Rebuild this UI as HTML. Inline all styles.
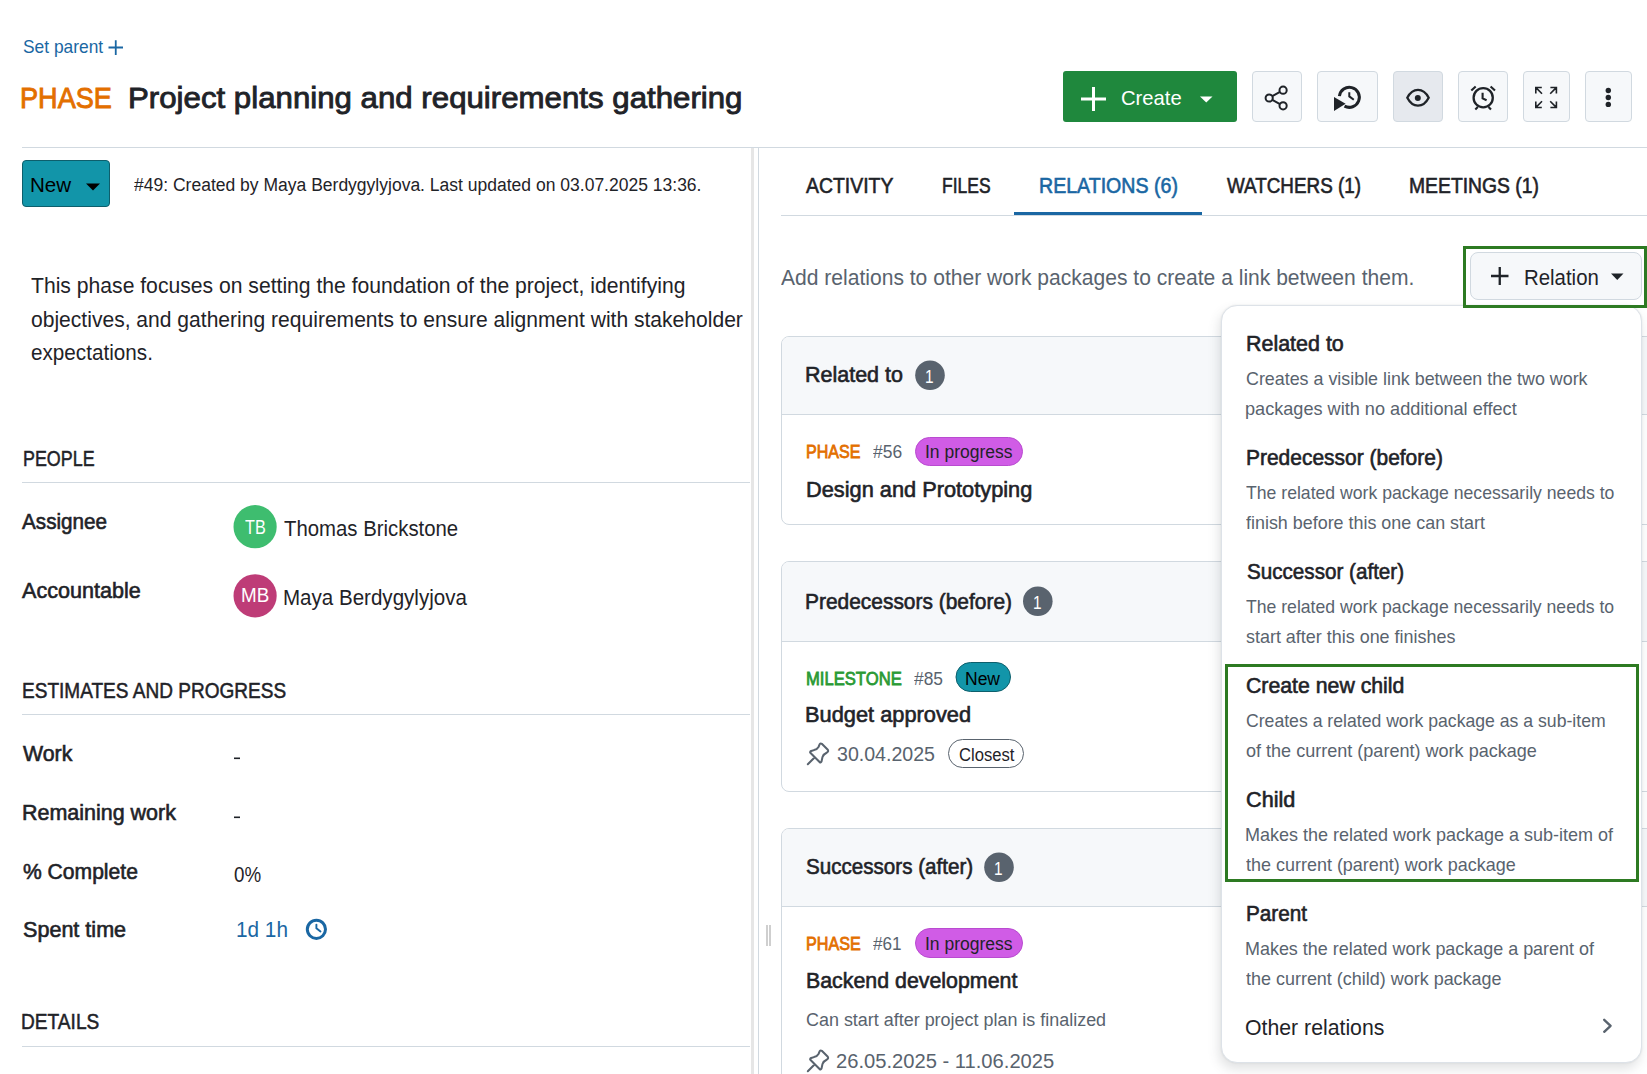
<!DOCTYPE html>
<html><head><meta charset="utf-8"><title>Work package</title>
<style>
html,body{margin:0;padding:0;background:#fff;width:1647px;height:1074px;overflow:hidden;position:relative;font-family:"Liberation Sans",sans-serif;}
.t{position:absolute;white-space:nowrap;transform-origin:0 0;}
.a{position:absolute;box-sizing:border-box;}
svg.i{position:absolute;overflow:visible;}
</style></head><body>

<!-- header -->
<svg class="i" style="left:0;top:0" width="1647" height="1074">
  <!-- set parent plus -->
  <path d="M108.5 47.5H123M115.75 40.2V55" stroke="#1a67a3" stroke-width="1.8" fill="none"/>
</svg>

<!-- Create button -->
<div class="a" style="left:1063px;top:71px;width:174px;height:51px;background:#1f883d;border-radius:3px;"></div>
<svg class="i" style="left:0;top:0" width="1647" height="200">
  <path d="M1081 99H1106M1093.5 87V111" stroke="#fff" stroke-width="3" fill="none"/>
  <path d="M1200 96.5H1212.5L1206.25 102.5Z" fill="#fff"/>
</svg>

<!-- icon buttons -->
<div class="a" style="left:1252px;top:71px;width:50px;height:51px;background:#f6f8fa;border:1px solid #d1d9e0;border-radius:4px;"></div>
<div class="a" style="left:1317px;top:71px;width:61px;height:51px;background:#f6f8fa;border:1px solid #d1d9e0;border-radius:4px;"></div>
<div class="a" style="left:1393px;top:71px;width:50px;height:51px;background:#e6e9ee;border:1px solid #d1d9e0;border-radius:4px;"></div>
<div class="a" style="left:1458px;top:71px;width:50px;height:51px;background:#f6f8fa;border:1px solid #d1d9e0;border-radius:4px;"></div>
<div class="a" style="left:1523px;top:71px;width:47px;height:51px;background:#f6f8fa;border:1px solid #d1d9e0;border-radius:4px;"></div>
<div class="a" style="left:1585px;top:71px;width:47px;height:51px;background:#f6f8fa;border:1px solid #d1d9e0;border-radius:4px;"></div>
<svg class="i" style="left:0;top:0" width="1647" height="200">
  <g stroke="#1f2328" stroke-width="2" fill="none">
    <!-- share -->
    <circle cx="1269.2" cy="98" r="3.6"/><circle cx="1283.1" cy="90.2" r="3.6"/><circle cx="1283.1" cy="105.8" r="3.6"/>
    <path d="M1272.3 96.2L1280 91.9M1272.3 99.8L1280 104.1"/>
    <!-- history -->
    <path d="M1339.4 96.1A10 10 0 1 1 1344.5 106.1" stroke-width="3"/>
    <path d="M1349.3 92.2V96.4L1353.8 99.8" stroke-width="2"/>
    <!-- eye -->
    <path d="M1407.3 97.8C1410 92.5 1413.8 89.9 1418 89.9C1422.2 89.9 1426 92.5 1428.7 97.8C1426 103.1 1422.2 105.7 1418 105.7C1413.8 105.7 1410 103.1 1407.3 97.8Z" stroke-width="2.3"/>
    <!-- alarm -->
    <circle cx="1483.2" cy="97.7" r="9.6" stroke-width="2.3"/>
    <path d="M1482.6 92.8V98.4L1486.6 100.2" stroke-width="2.1"/>
    <path d="M1471.3 90.6L1475.7 86.5M1495 90.6L1490.6 86.5M1477.8 107L1475.3 109.6M1488.5 107L1491 109.6" stroke-width="2.1"/>
    <!-- fullscreen -->
    <path d="M1535.8 93.5V87.5H1541.8M1536.2 87.9L1542 93.7M1556.4 93.5V87.5H1550.4M1556 87.9L1550.2 93.7M1535.8 101.5V107.5H1541.8M1536.2 107.1L1542 101.3M1556.4 101.5V107.5H1550.4M1556 107.1L1550.2 101.3" stroke-width="1.6"/>
  </g>
  <path d="M1334 97L1334 111L1345.6 103.7Z" fill="#1f2328"/>
  <circle cx="1417.8" cy="97.9" r="3" fill="#1f2328"/>
  <circle cx="1608.3" cy="90.5" r="2.7" fill="#1f2328"/><circle cx="1608.3" cy="97.5" r="2.7" fill="#1f2328"/><circle cx="1608.3" cy="104.4" r="2.7" fill="#1f2328"/>
</svg>

<!-- top divider -->
<div class="a" style="left:22px;top:147px;width:1625px;height:1px;background:#d1d9e0;"></div>

<!-- left panel -->
<div class="a" style="left:22px;top:160px;width:88px;height:47px;background:#1295a9;border:1px solid #0d5f6c;border-radius:4px;"></div>
<svg class="i" style="left:0;top:0" width="760" height="1074">
  <path d="M86 183.5H100L93 190.5Z" fill="#000"/>
  <circle cx="255.1" cy="526.7" r="21.6" fill="#3ebd6f"/>
  <circle cx="255.1" cy="595.8" r="21.6" fill="#be3c77"/>
  <rect x="234" y="757.5" width="6" height="1.6" fill="#1f2328"/>
  <rect x="234" y="816.5" width="6" height="1.6" fill="#1f2328"/>
  <circle cx="316.4" cy="929.3" r="9.1" stroke="#1a67a3" stroke-width="3" fill="none"/>
  <path d="M316.4 924.6V928.2L320.5 931.5" stroke="#1a67a3" stroke-width="1.9" stroke-linecap="round" fill="none"/>
</svg>
<div class="a" style="left:22px;top:482px;width:728px;height:1px;background:#d1d9e0;"></div>
<div class="a" style="left:22px;top:714px;width:728px;height:1px;background:#d1d9e0;"></div>
<div class="a" style="left:22px;top:1046px;width:728px;height:1px;background:#d1d9e0;"></div>

<!-- scrollbar + splitter -->
<div class="a" style="left:751px;top:148px;width:3px;height:926px;background:#e6e6e6;"></div>
<div class="a" style="left:758px;top:148px;width:1px;height:926px;background:#d1d9e0;"></div>
<div class="a" style="left:766px;top:925px;width:2px;height:21px;background:#cfcfcf;"></div>
<div class="a" style="left:769px;top:925px;width:2px;height:21px;background:#cfcfcf;"></div>

<!-- tabs -->
<div class="a" style="left:781px;top:215px;width:866px;height:1px;background:#d1d9e0;"></div>
<div class="a" style="left:1014px;top:212px;width:188px;height:3px;background:#1a67a3;"></div>

<!-- cards -->
<div class="a" style="left:781px;top:336px;width:900px;height:189px;border:1px solid #d1d9e0;border-radius:8px;background:#fff;overflow:hidden;">
  <div class="a" style="left:0;top:0;width:100%;height:78px;background:#f6f8fa;border-bottom:1px solid #d1d9e0;"></div>
</div>
<div class="a" style="left:781px;top:561px;width:900px;height:231px;border:1px solid #d1d9e0;border-radius:8px;background:#fff;overflow:hidden;">
  <div class="a" style="left:0;top:0;width:100%;height:80px;background:#f6f8fa;border-bottom:1px solid #d1d9e0;"></div>
</div>
<div class="a" style="left:781px;top:828px;width:900px;height:300px;border:1px solid #d1d9e0;border-radius:8px;background:#fff;overflow:hidden;">
  <div class="a" style="left:0;top:0;width:100%;height:78px;background:#f6f8fa;border-bottom:1px solid #d1d9e0;"></div>
</div>
<svg class="i" style="left:0;top:0" width="1647" height="1074">
  <circle cx="930" cy="375.2" r="14.8" fill="#59636e"/>
  <circle cx="1037.8" cy="601.3" r="14.8" fill="#59636e"/>
  <circle cx="999" cy="867.3" r="14.8" fill="#59636e"/>
  <rect x="915.5" y="437.5" width="107" height="28" rx="14" fill="#d05ce6" stroke="#b94bd0" stroke-width="1"/>
  <rect x="915.5" y="928.5" width="107" height="29" rx="14.5" fill="#d05ce6" stroke="#b94bd0" stroke-width="1"/>
  <rect x="956" y="662.5" width="54.5" height="29" rx="14.5" fill="#1295a9" stroke="#0d5f6c" stroke-width="1"/>
  <rect x="948.5" y="739.5" width="75" height="28" rx="14" fill="#fff" stroke="#59636e" stroke-width="1"/>
  <g stroke="#59636e" stroke-width="2" fill="none" stroke-linejoin="round" stroke-linecap="round">
    <path transform="translate(802 738)" d="M8.3 14.8L17.8 24.3Q18.8 24.9 19.5 23.5L20.5 19Q21.6 16 25 14.5Q26.8 13.5 25.8 11.8L19.8 5.8Q18.5 5 17.6 6.3L16.5 9Q15 11.6 12 12.1L9.2 13Q7.6 13.8 8.3 14.8ZM5.8 26.3L12.3 19.8"/>
    <path transform="translate(802 1045)" d="M8.3 14.8L17.8 24.3Q18.8 24.9 19.5 23.5L20.5 19Q21.6 16 25 14.5Q26.8 13.5 25.8 11.8L19.8 5.8Q18.5 5 17.6 6.3L16.5 9Q15 11.6 12 12.1L9.2 13Q7.6 13.8 8.3 14.8ZM5.8 26.3L12.3 19.8"/>
  </g>
</svg>

<!-- relation button + highlight -->
<div class="a" style="left:1469.5px;top:252px;width:172.5px;height:48px;background:#f6f8fa;border:1px solid #d1d9e0;border-radius:8px;"></div>
<svg class="i" style="left:0;top:0" width="1647" height="400">
  <path d="M1491 276H1508.5M1499.75 267V285" stroke="#1f2328" stroke-width="2.3" fill="none"/>
  <path d="M1611 273.5H1623.5L1617.25 280Z" fill="#1f2328"/>
</svg>

<div class="t" id="t0" style="left:22.50px;top:38.00px;font-size:18.6px;line-height:18.6px;font-weight:normal;color:#1a67a3;transform:scaleX(0.9339)">Set parent<span class="bm" style="display:inline-block;width:0;height:0;vertical-align:baseline"></span></div>
<div class="t" id="t1" style="left:20.21px;top:83.00px;font-size:30.3px;line-height:30.3px;font-weight:normal;-webkit-text-stroke:0.9px #e36f00;color:#e36f00;transform:scaleX(0.8944)">PHASE<span class="bm" style="display:inline-block;width:0;height:0;vertical-align:baseline"></span></div>
<div class="t" id="t2" style="left:127.94px;top:83.00px;font-size:30.3px;line-height:30.3px;font-weight:normal;-webkit-text-stroke:0.9px #1f2328;color:#1f2328;transform:scaleX(1.0306)">Project planning and requirements gathering<span class="bm" style="display:inline-block;width:0;height:0;vertical-align:baseline"></span></div>
<div class="t" id="t3" style="left:1121.04px;top:87.00px;font-size:21px;line-height:21px;font-weight:normal;color:#ffffff;transform:scaleX(0.9617)">Create<span class="bm" style="display:inline-block;width:0;height:0;vertical-align:baseline"></span></div>
<div class="t" id="t4" style="left:30.02px;top:174.00px;font-size:21px;line-height:21px;font-weight:normal;color:#000000;transform:scaleX(0.9798)">New<span class="bm" style="display:inline-block;width:0;height:0;vertical-align:baseline"></span></div>
<div class="t" id="t5" style="left:134.00px;top:176.00px;font-size:18px;line-height:18px;font-weight:normal;color:#1f2328;transform:scaleX(0.9727)">#49: Created by Maya Berdygylyjova. Last updated on 03.07.2025 13:36.<span class="bm" style="display:inline-block;width:0;height:0;vertical-align:baseline"></span></div>
<div class="t" id="t6" style="left:31.00px;top:276.00px;font-size:21.4px;line-height:21.4px;font-weight:normal;color:#1f2328;transform:scaleX(0.9880)">This phase focuses on setting the foundation of the project, identifying<span class="bm" style="display:inline-block;width:0;height:0;vertical-align:baseline"></span></div>
<div class="t" id="t7" style="left:31.00px;top:310.00px;font-size:21.4px;line-height:21.4px;font-weight:normal;color:#1f2328;transform:scaleX(0.9847)">objectives, and gathering requirements to ensure alignment with stakeholder<span class="bm" style="display:inline-block;width:0;height:0;vertical-align:baseline"></span></div>
<div class="t" id="t8" style="left:31.00px;top:343.00px;font-size:21.4px;line-height:21.4px;font-weight:normal;color:#1f2328;transform:scaleX(0.9669)">expectations.<span class="bm" style="display:inline-block;width:0;height:0;vertical-align:baseline"></span></div>
<div class="t" id="t9" style="left:22.66px;top:449.00px;font-size:21.4px;line-height:21.4px;font-weight:normal;-webkit-text-stroke:0.5px #1f2328;color:#1f2328;transform:scaleX(0.8359)">PEOPLE<span class="bm" style="display:inline-block;width:0;height:0;vertical-align:baseline"></span></div>
<div class="t" id="t10" style="left:22.40px;top:512.00px;font-size:21.4px;line-height:21.4px;font-weight:normal;-webkit-text-stroke:0.6px #1f2328;color:#1f2328;transform:scaleX(0.9667)">Assignee<span class="bm" style="display:inline-block;width:0;height:0;vertical-align:baseline"></span></div>
<div class="t" id="t11" style="left:244.50px;top:518.00px;font-size:19.8px;line-height:19.8px;font-weight:normal;color:#ffffff;transform:scaleX(0.8173)">TB<span class="bm" style="display:inline-block;width:0;height:0;vertical-align:baseline"></span></div>
<div class="t" id="t12" style="left:283.70px;top:519.00px;font-size:21.4px;line-height:21.4px;font-weight:normal;color:#1f2328;transform:scaleX(0.9513)">Thomas Brickstone<span class="bm" style="display:inline-block;width:0;height:0;vertical-align:baseline"></span></div>
<div class="t" id="t13" style="left:22.40px;top:581.00px;font-size:21.4px;line-height:21.4px;font-weight:normal;-webkit-text-stroke:0.6px #1f2328;color:#1f2328;transform:scaleX(1.0083)">Accountable<span class="bm" style="display:inline-block;width:0;height:0;vertical-align:baseline"></span></div>
<div class="t" id="t14" style="left:241.06px;top:585.00px;font-size:20px;line-height:20px;font-weight:normal;color:#ffffff;transform:scaleX(0.9421)">MB<span class="bm" style="display:inline-block;width:0;height:0;vertical-align:baseline"></span></div>
<div class="t" id="t15" style="left:283.04px;top:588.00px;font-size:21.4px;line-height:21.4px;font-weight:normal;color:#1f2328;transform:scaleX(0.9606)">Maya Berdygylyjova<span class="bm" style="display:inline-block;width:0;height:0;vertical-align:baseline"></span></div>
<div class="t" id="t16" style="left:21.91px;top:681.00px;font-size:21.4px;line-height:21.4px;font-weight:normal;-webkit-text-stroke:0.5px #1f2328;color:#1f2328;transform:scaleX(0.8899)">ESTIMATES AND PROGRESS<span class="bm" style="display:inline-block;width:0;height:0;vertical-align:baseline"></span></div>
<div class="t" id="t17" style="left:22.80px;top:744.00px;font-size:21.4px;line-height:21.4px;font-weight:normal;-webkit-text-stroke:0.6px #1f2328;color:#1f2328;transform:scaleX(0.9955)">Work<span class="bm" style="display:inline-block;width:0;height:0;vertical-align:baseline"></span></div>
<div class="t" id="t18" style="left:21.80px;top:803.00px;font-size:21.4px;line-height:21.4px;font-weight:normal;-webkit-text-stroke:0.6px #1f2328;color:#1f2328;transform:scaleX(1.0035)">Remaining work<span class="bm" style="display:inline-block;width:0;height:0;vertical-align:baseline"></span></div>
<div class="t" id="t19" style="left:22.80px;top:862.00px;font-size:21.4px;line-height:21.4px;font-weight:normal;-webkit-text-stroke:0.6px #1f2328;color:#1f2328;transform:scaleX(0.9860)">% Complete<span class="bm" style="display:inline-block;width:0;height:0;vertical-align:baseline"></span></div>
<div class="t" id="t20" style="left:233.60px;top:865.00px;font-size:21.4px;line-height:21.4px;font-weight:normal;color:#1f2328;transform:scaleX(0.8771)">0%<span class="bm" style="display:inline-block;width:0;height:0;vertical-align:baseline"></span></div>
<div class="t" id="t21" style="left:22.80px;top:920.00px;font-size:21.4px;line-height:21.4px;font-weight:normal;-webkit-text-stroke:0.6px #1f2328;color:#1f2328;transform:scaleX(1.0083)">Spent time<span class="bm" style="display:inline-block;width:0;height:0;vertical-align:baseline"></span></div>
<div class="t" id="t22" style="left:235.73px;top:920.00px;font-size:21.4px;line-height:21.4px;font-weight:normal;color:#1a67a3;transform:scaleX(0.9703)">1d 1h<span class="bm" style="display:inline-block;width:0;height:0;vertical-align:baseline"></span></div>
<div class="t" id="t23" style="left:21.41px;top:1012.00px;font-size:21.4px;line-height:21.4px;font-weight:normal;-webkit-text-stroke:0.5px #1f2328;color:#1f2328;transform:scaleX(0.8946)">DETAILS<span class="bm" style="display:inline-block;width:0;height:0;vertical-align:baseline"></span></div>
<div class="t" id="t24" style="left:805.50px;top:176.00px;font-size:21.4px;line-height:21.4px;font-weight:normal;-webkit-text-stroke:0.6px #1f2328;color:#1f2328;transform:scaleX(0.9073)">ACTIVITY<span class="bm" style="display:inline-block;width:0;height:0;vertical-align:baseline"></span></div>
<div class="t" id="t25" style="left:941.68px;top:176.00px;font-size:21.4px;line-height:21.4px;font-weight:normal;-webkit-text-stroke:0.6px #1f2328;color:#1f2328;transform:scaleX(0.8165)">FILES<span class="bm" style="display:inline-block;width:0;height:0;vertical-align:baseline"></span></div>
<div class="t" id="t26" style="left:1039.08px;top:176.00px;font-size:21.4px;line-height:21.4px;font-weight:normal;-webkit-text-stroke:0.6px #1a67a3;color:#1a67a3;transform:scaleX(0.9157)">RELATIONS (6)<span class="bm" style="display:inline-block;width:0;height:0;vertical-align:baseline"></span></div>
<div class="t" id="t27" style="left:1227.00px;top:176.00px;font-size:21.4px;line-height:21.4px;font-weight:normal;-webkit-text-stroke:0.6px #1f2328;color:#1f2328;transform:scaleX(0.8809)">WATCHERS (1)<span class="bm" style="display:inline-block;width:0;height:0;vertical-align:baseline"></span></div>
<div class="t" id="t28" style="left:1409.10px;top:176.00px;font-size:21.4px;line-height:21.4px;font-weight:normal;-webkit-text-stroke:0.6px #1f2328;color:#1f2328;transform:scaleX(0.9035)">MEETINGS (1)<span class="bm" style="display:inline-block;width:0;height:0;vertical-align:baseline"></span></div>
<div class="t" id="t29" style="left:781.30px;top:268.00px;font-size:21.4px;line-height:21.4px;font-weight:normal;color:#59636e;transform:scaleX(0.9845)">Add relations to other work packages to create a link between them.<span class="bm" style="display:inline-block;width:0;height:0;vertical-align:baseline"></span></div>
<div class="t" id="t30" style="left:1524.05px;top:268.00px;font-size:21.4px;line-height:21.4px;font-weight:normal;color:#1f2328;transform:scaleX(0.9532)">Relation<span class="bm" style="display:inline-block;width:0;height:0;vertical-align:baseline"></span></div>
<div class="t" id="t31" style="left:805.00px;top:365.00px;font-size:21.4px;line-height:21.4px;font-weight:normal;-webkit-text-stroke:0.6px #1f2328;color:#1f2328;transform:scaleX(1.0040)">Related to<span class="bm" style="display:inline-block;width:0;height:0;vertical-align:baseline"></span></div>
<div class="t" id="t32" style="left:925.17px;top:368.00px;font-size:18.5px;line-height:18.5px;font-weight:normal;color:#ffffff;transform:scaleX(0.8333)">1<span class="bm" style="display:inline-block;width:0;height:0;vertical-align:baseline"></span></div>
<div class="t" id="t33" style="left:806.11px;top:443.00px;font-size:18px;line-height:18px;font-weight:normal;-webkit-text-stroke:0.8px #e36f00;color:#e36f00;transform:scaleX(0.8914)">PHASE<span class="bm" style="display:inline-block;width:0;height:0;vertical-align:baseline"></span></div>
<div class="t" id="t34" style="left:873.30px;top:443.00px;font-size:18px;line-height:18px;font-weight:normal;color:#59636e;transform:scaleX(0.9693)">#56<span class="bm" style="display:inline-block;width:0;height:0;vertical-align:baseline"></span></div>
<div class="t" id="t35" style="left:925.03px;top:443.00px;font-size:18px;line-height:18px;font-weight:normal;color:#1f2328;transform:scaleX(0.9714)">In progress<span class="bm" style="display:inline-block;width:0;height:0;vertical-align:baseline"></span></div>
<div class="t" id="t36" style="left:806.28px;top:480.00px;font-size:21.4px;line-height:21.4px;font-weight:normal;-webkit-text-stroke:0.6px #1f2328;color:#1f2328;transform:scaleX(1.0178)">Design and Prototyping<span class="bm" style="display:inline-block;width:0;height:0;vertical-align:baseline"></span></div>
<div class="t" id="t37" style="left:804.72px;top:592.00px;font-size:21.4px;line-height:21.4px;font-weight:normal;-webkit-text-stroke:0.6px #1f2328;color:#1f2328;transform:scaleX(0.9781)">Predecessors (before)<span class="bm" style="display:inline-block;width:0;height:0;vertical-align:baseline"></span></div>
<div class="t" id="t38" style="left:1033.17px;top:594.00px;font-size:18.5px;line-height:18.5px;font-weight:normal;color:#ffffff;transform:scaleX(0.8333)">1<span class="bm" style="display:inline-block;width:0;height:0;vertical-align:baseline"></span></div>
<div class="t" id="t39" style="left:805.58px;top:670.00px;font-size:18px;line-height:18px;font-weight:normal;-webkit-text-stroke:0.8px #2a9a35;color:#2a9a35;transform:scaleX(0.9232)">MILESTONE<span class="bm" style="display:inline-block;width:0;height:0;vertical-align:baseline"></span></div>
<div class="t" id="t40" style="left:914.00px;top:670.00px;font-size:18px;line-height:18px;font-weight:normal;color:#59636e;transform:scaleX(0.9660)">#85<span class="bm" style="display:inline-block;width:0;height:0;vertical-align:baseline"></span></div>
<div class="t" id="t41" style="left:965.03px;top:670.00px;font-size:18px;line-height:18px;font-weight:normal;color:#000000;transform:scaleX(0.9720)">New<span class="bm" style="display:inline-block;width:0;height:0;vertical-align:baseline"></span></div>
<div class="t" id="t42" style="left:805.48px;top:705.00px;font-size:21.4px;line-height:21.4px;font-weight:normal;-webkit-text-stroke:0.6px #1f2328;color:#1f2328;transform:scaleX(1.0190)">Budget approved<span class="bm" style="display:inline-block;width:0;height:0;vertical-align:baseline"></span></div>
<div class="t" id="t43" style="left:836.90px;top:744.00px;font-size:20px;line-height:20px;font-weight:normal;color:#59636e;transform:scaleX(0.9792)">30.04.2025<span class="bm" style="display:inline-block;width:0;height:0;vertical-align:baseline"></span></div>
<div class="t" id="t44" style="left:958.50px;top:747.00px;font-size:17.5px;line-height:17.5px;font-weight:normal;color:#1f2328;transform:scaleX(0.9489)">Closest<span class="bm" style="display:inline-block;width:0;height:0;vertical-align:baseline"></span></div>
<div class="t" id="t45" style="left:805.70px;top:857.00px;font-size:21.4px;line-height:21.4px;font-weight:normal;-webkit-text-stroke:0.6px #1f2328;color:#1f2328;transform:scaleX(0.9633)">Successors (after)<span class="bm" style="display:inline-block;width:0;height:0;vertical-align:baseline"></span></div>
<div class="t" id="t46" style="left:994.17px;top:860.00px;font-size:18.5px;line-height:18.5px;font-weight:normal;color:#ffffff;transform:scaleX(0.8333)">1<span class="bm" style="display:inline-block;width:0;height:0;vertical-align:baseline"></span></div>
<div class="t" id="t47" style="left:806.10px;top:935.00px;font-size:18px;line-height:18px;font-weight:normal;-webkit-text-stroke:0.8px #e36f00;color:#e36f00;transform:scaleX(0.8964)">PHASE<span class="bm" style="display:inline-block;width:0;height:0;vertical-align:baseline"></span></div>
<div class="t" id="t48" style="left:873.30px;top:935.00px;font-size:18px;line-height:18px;font-weight:normal;color:#59636e;transform:scaleX(0.9493)">#61<span class="bm" style="display:inline-block;width:0;height:0;vertical-align:baseline"></span></div>
<div class="t" id="t49" style="left:925.03px;top:935.00px;font-size:18px;line-height:18px;font-weight:normal;color:#1f2328;transform:scaleX(0.9714)">In progress<span class="bm" style="display:inline-block;width:0;height:0;vertical-align:baseline"></span></div>
<div class="t" id="t50" style="left:805.50px;top:971.00px;font-size:21.4px;line-height:21.4px;font-weight:normal;-webkit-text-stroke:0.6px #1f2328;color:#1f2328;transform:scaleX(0.9984)">Backend development<span class="bm" style="display:inline-block;width:0;height:0;vertical-align:baseline"></span></div>
<div class="t" id="t51" style="left:806.20px;top:1011.00px;font-size:18px;line-height:18px;font-weight:normal;color:#59636e;transform:scaleX(0.9965)">Can start after project plan is finalized<span class="bm" style="display:inline-block;width:0;height:0;vertical-align:baseline"></span></div>
<div class="t" id="t52" style="left:835.89px;top:1051.00px;font-size:20px;line-height:20px;font-weight:normal;color:#59636e;transform:scaleX(1.0081)">26.05.2025 - 11.06.2025<span class="bm" style="display:inline-block;width:0;height:0;vertical-align:baseline"></span></div>

<!-- dropdown menu -->
<div class="a" style="left:1221px;top:305px;width:421px;height:758px;background:#fff;border:1px solid #dde2e8;border-radius:16px;box-shadow:0 0 2px rgba(31,35,40,0.10),-2px 6px 12px rgba(66,74,83,0.16);"></div>
<div class="a" style="left:1225px;top:664px;width:414px;height:218px;border:3px solid #2d7a22;"></div>
<svg class="i" style="left:0;top:0" width="1647" height="1074">
  <path d="M1604.2 1019.8L1610.6 1025.8L1604.2 1031.8" stroke="#59636e" stroke-width="2.4" stroke-linecap="round" stroke-linejoin="round" fill="none"/>
</svg>

<div class="t" id="t53" style="left:1246.00px;top:334.00px;font-size:21.4px;line-height:21.4px;font-weight:normal;-webkit-text-stroke:0.6px #1f2328;color:#1f2328;transform:scaleX(1.0030)">Related to<span class="bm" style="display:inline-block;width:0;height:0;vertical-align:baseline"></span></div>
<div class="t" id="t54" style="left:1246.00px;top:370.00px;font-size:18.6px;line-height:18.6px;font-weight:normal;color:#59636e;transform:scaleX(0.9606)">Creates a visible link between the two work<span class="bm" style="display:inline-block;width:0;height:0;vertical-align:baseline"></span></div>
<div class="t" id="t55" style="left:1245.03px;top:400.00px;font-size:18.6px;line-height:18.6px;font-weight:normal;color:#59636e;transform:scaleX(0.9746)">packages with no additional effect<span class="bm" style="display:inline-block;width:0;height:0;vertical-align:baseline"></span></div>
<div class="t" id="t56" style="left:1246.02px;top:448.00px;font-size:21.4px;line-height:21.4px;font-weight:normal;-webkit-text-stroke:0.6px #1f2328;color:#1f2328;transform:scaleX(0.9799)">Predecessor (before)<span class="bm" style="display:inline-block;width:0;height:0;vertical-align:baseline"></span></div>
<div class="t" id="t57" style="left:1246.00px;top:484.00px;font-size:18.6px;line-height:18.6px;font-weight:normal;color:#59636e;transform:scaleX(0.9480)">The related work package necessarily needs to<span class="bm" style="display:inline-block;width:0;height:0;vertical-align:baseline"></span></div>
<div class="t" id="t58" style="left:1246.00px;top:514.00px;font-size:18.6px;line-height:18.6px;font-weight:normal;color:#59636e;transform:scaleX(0.9631)">finish before this one can start<span class="bm" style="display:inline-block;width:0;height:0;vertical-align:baseline"></span></div>
<div class="t" id="t59" style="left:1247.00px;top:562.00px;font-size:21.4px;line-height:21.4px;font-weight:normal;-webkit-text-stroke:0.6px #1f2328;color:#1f2328;transform:scaleX(0.9646)">Successor (after)<span class="bm" style="display:inline-block;width:0;height:0;vertical-align:baseline"></span></div>
<div class="t" id="t60" style="left:1246.00px;top:598.00px;font-size:18.6px;line-height:18.6px;font-weight:normal;color:#59636e;transform:scaleX(0.9473)">The related work package necessarily needs to<span class="bm" style="display:inline-block;width:0;height:0;vertical-align:baseline"></span></div>
<div class="t" id="t61" style="left:1246.00px;top:628.00px;font-size:18.6px;line-height:18.6px;font-weight:normal;color:#59636e;transform:scaleX(0.9648)">start after this one finishes<span class="bm" style="display:inline-block;width:0;height:0;vertical-align:baseline"></span></div>
<div class="t" id="t62" style="left:1246.01px;top:676.00px;font-size:21.4px;line-height:21.4px;font-weight:normal;-webkit-text-stroke:0.6px #1f2328;color:#1f2328;transform:scaleX(0.9941)">Create new child<span class="bm" style="display:inline-block;width:0;height:0;vertical-align:baseline"></span></div>
<div class="t" id="t63" style="left:1246.00px;top:712.00px;font-size:18.6px;line-height:18.6px;font-weight:normal;color:#59636e;transform:scaleX(0.9482)">Creates a related work package as a sub-item<span class="bm" style="display:inline-block;width:0;height:0;vertical-align:baseline"></span></div>
<div class="t" id="t64" style="left:1246.00px;top:742.00px;font-size:18.6px;line-height:18.6px;font-weight:normal;color:#59636e;transform:scaleX(0.9704)">of the current (parent) work package<span class="bm" style="display:inline-block;width:0;height:0;vertical-align:baseline"></span></div>
<div class="t" id="t65" style="left:1245.99px;top:790.00px;font-size:21.4px;line-height:21.4px;font-weight:normal;-webkit-text-stroke:0.6px #1f2328;color:#1f2328;transform:scaleX(1.0118)">Child<span class="bm" style="display:inline-block;width:0;height:0;vertical-align:baseline"></span></div>
<div class="t" id="t66" style="left:1245.03px;top:826.00px;font-size:18.6px;line-height:18.6px;font-weight:normal;color:#59636e;transform:scaleX(0.9675)">Makes the related work package a sub-item of<span class="bm" style="display:inline-block;width:0;height:0;vertical-align:baseline"></span></div>
<div class="t" id="t67" style="left:1246.00px;top:856.00px;font-size:18.6px;line-height:18.6px;font-weight:normal;color:#59636e;transform:scaleX(0.9663)">the current (parent) work package<span class="bm" style="display:inline-block;width:0;height:0;vertical-align:baseline"></span></div>
<div class="t" id="t68" style="left:1246.03px;top:904.00px;font-size:21.4px;line-height:21.4px;font-weight:normal;-webkit-text-stroke:0.6px #1f2328;color:#1f2328;transform:scaleX(0.9697)">Parent<span class="bm" style="display:inline-block;width:0;height:0;vertical-align:baseline"></span></div>
<div class="t" id="t69" style="left:1245.04px;top:940.00px;font-size:18.6px;line-height:18.6px;font-weight:normal;color:#59636e;transform:scaleX(0.9646)">Makes the related work package a parent of<span class="bm" style="display:inline-block;width:0;height:0;vertical-align:baseline"></span></div>
<div class="t" id="t70" style="left:1246.00px;top:970.00px;font-size:18.6px;line-height:18.6px;font-weight:normal;color:#59636e;transform:scaleX(0.9659)">the current (child) work package<span class="bm" style="display:inline-block;width:0;height:0;vertical-align:baseline"></span></div>
<div class="t" id="t71" style="left:1245.01px;top:1018.00px;font-size:21.4px;line-height:21.4px;font-weight:normal;color:#1f2328;transform:scaleX(0.9935)">Other relations<span class="bm" style="display:inline-block;width:0;height:0;vertical-align:baseline"></span></div>
<div class="a" style="left:1463px;top:246px;width:184px;height:62px;border:3px solid #2d7a22;"></div>


</body></html>
